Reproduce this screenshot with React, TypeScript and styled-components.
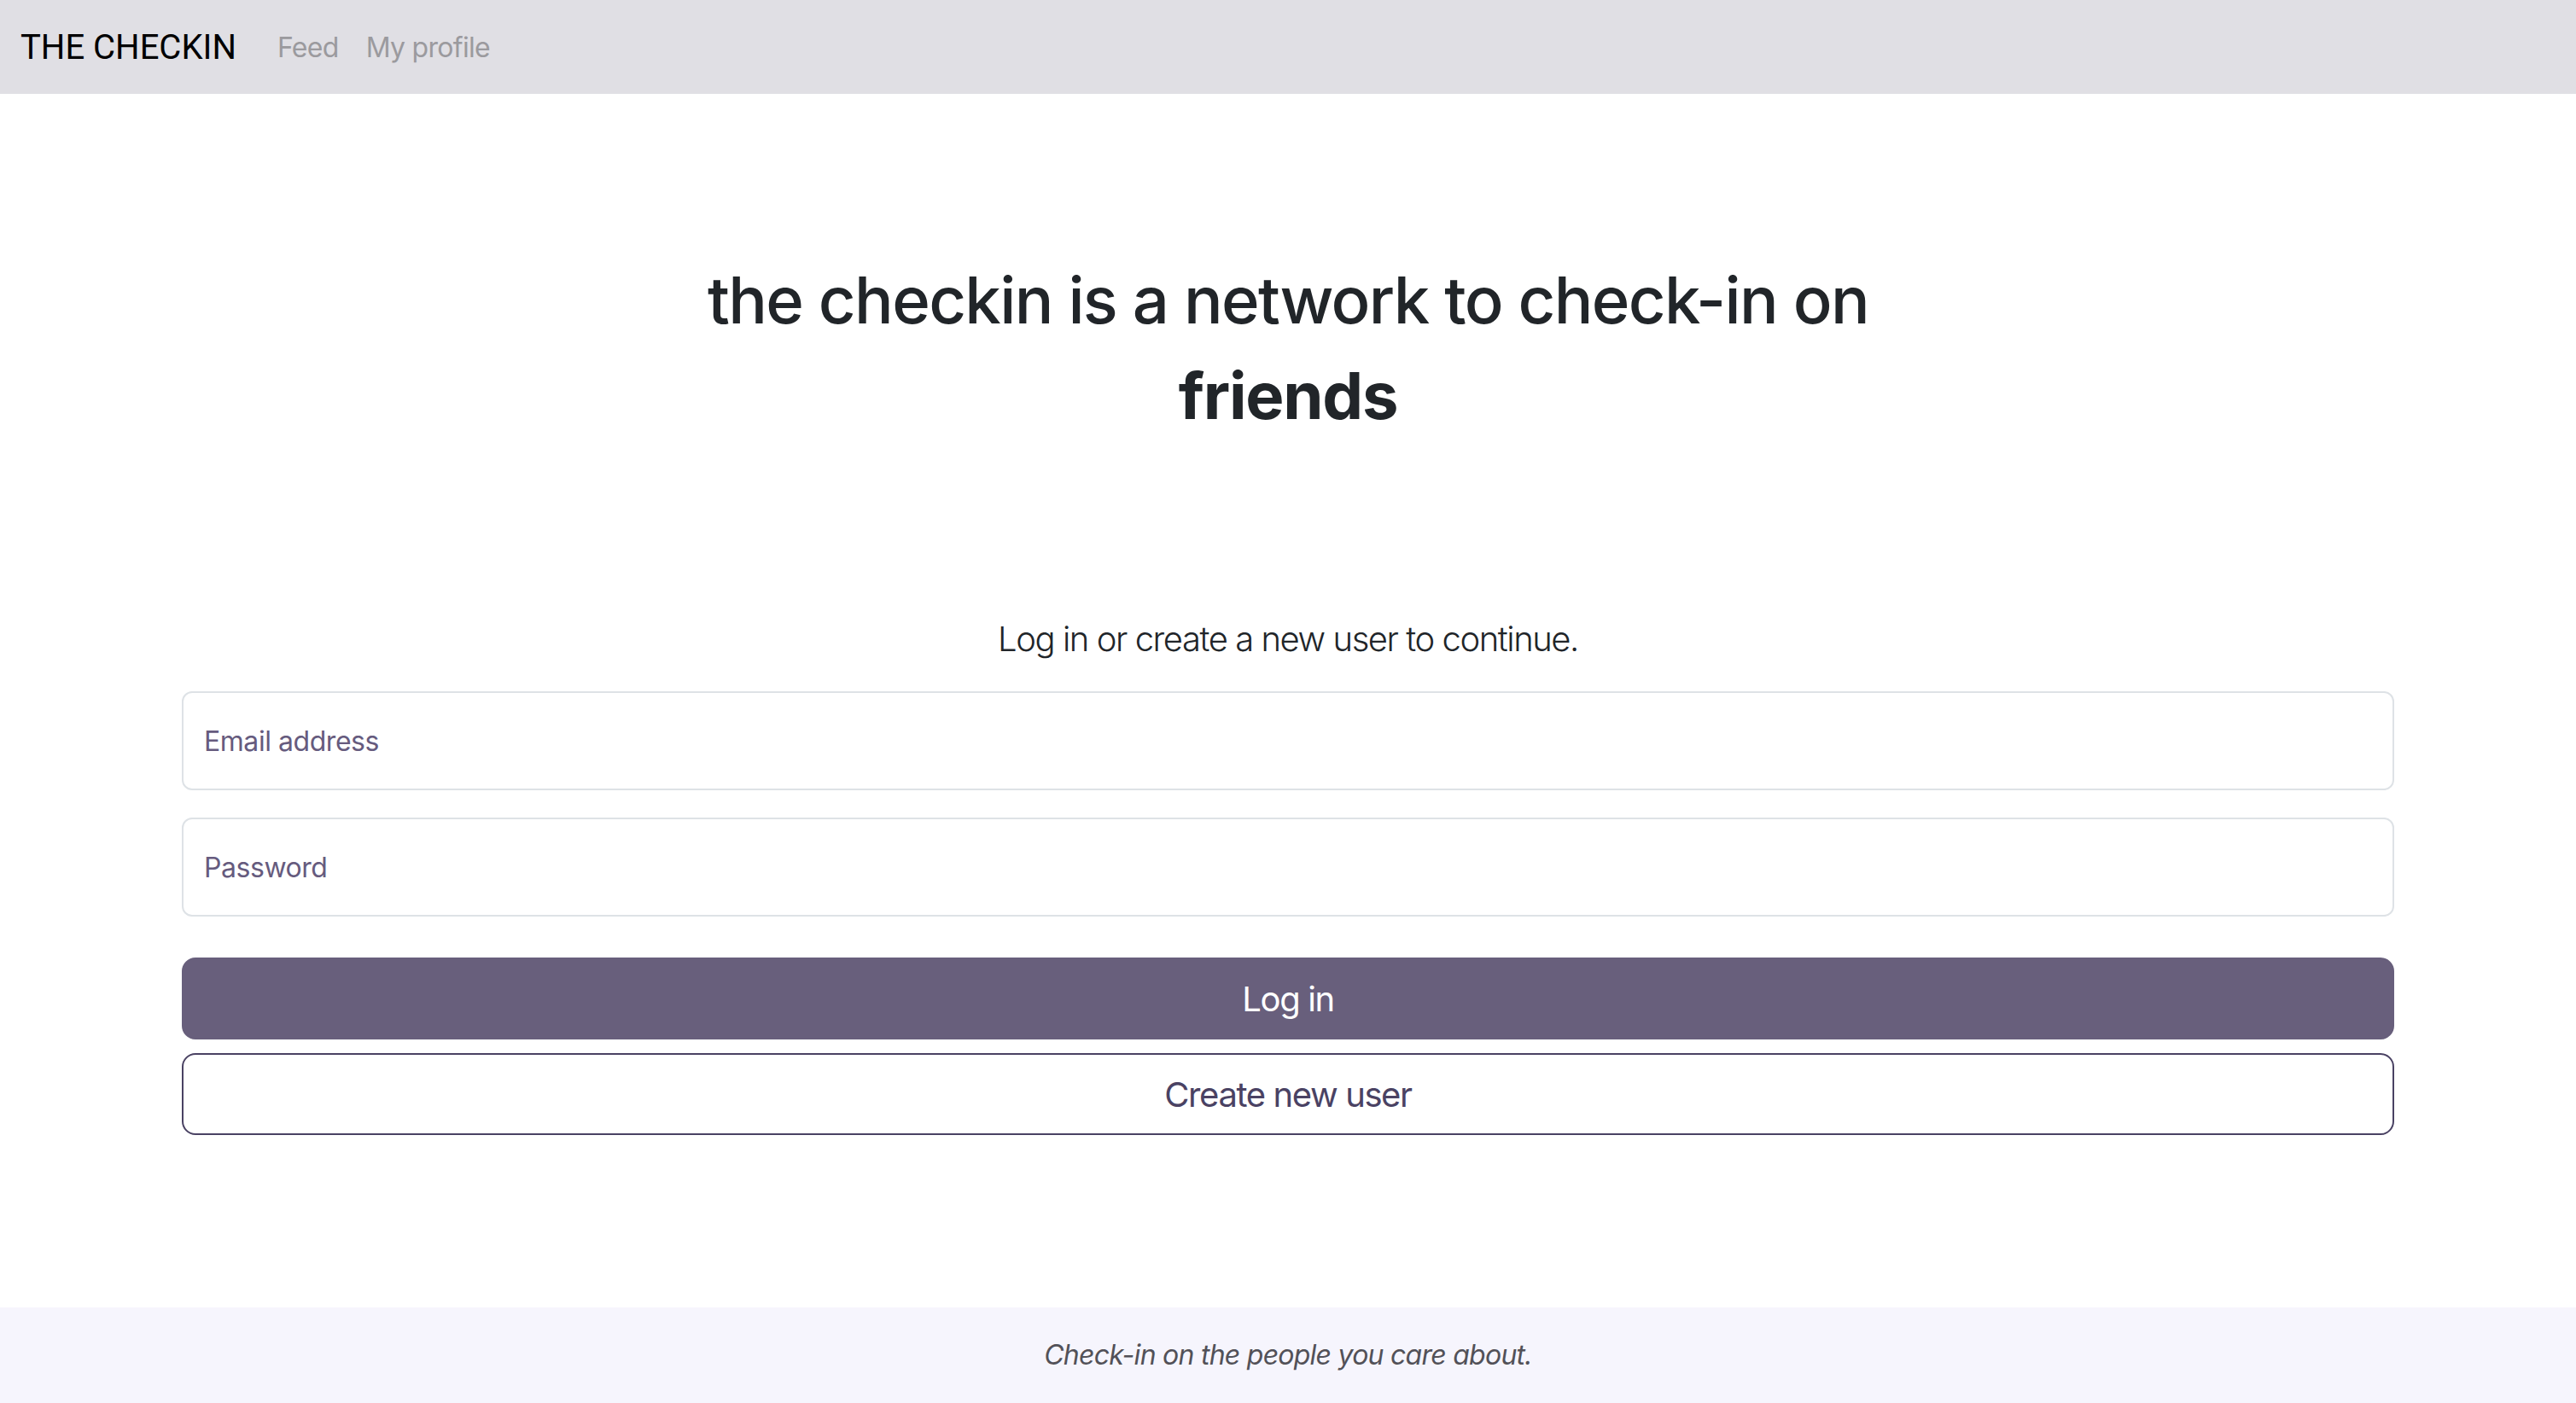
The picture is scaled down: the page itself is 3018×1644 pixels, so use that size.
import React from "react";
import styled, { createGlobalStyle } from "styled-components";

const GlobalStyle = createGlobalStyle`
  *, *::before, *::after { box-sizing: border-box; }
  html, body { margin: 0; padding: 0; }
  body {
    font-family: Inter, "Noto Sans", "Liberation Sans", sans-serif;
    color: #212529;
    background: #ffffff;
  }
`;

const Page = styled.div`
  display: flex;
  flex-direction: column;
  min-height: 100vh;
`;

const Navbar = styled.nav`
  display: flex;
  align-items: center;
  height: 110px;
  padding: 0 24px;
  background: #e0dfe4;
`;

const Brand = styled.a`
  font-family: Roboto, "Liberation Sans", sans-serif;
  font-size: 40px;
  color: #000000;
  text-decoration: none;
  margin-right: 32px;
`;

const NavList = styled.div`
  display: flex;
  align-items: center;
`;

const NavLink = styled.a`
  font-size: 32px;
  letter-spacing: -0.7px;
  color: #9b9a9e;
  text-decoration: none;
  padding: 0 16px;
`;

const Main = styled.main`
  flex: 1;
  width: 2592px;
  margin: 0 auto;
  display: flex;
  flex-direction: column;
`;

const Hero = styled.h1`
  margin: 185px auto 200px;
  max-width: 1500px;
  text-align: center;
  font-size: 76px;
  font-weight: 500;
  line-height: 112px;
  letter-spacing: -1.65px;
  color: #212529;
`;

const Strong = styled.strong`
  font-weight: 700;
  letter-spacing: -1.3px;
`;

const Lead = styled.p`
  margin: 0 0 31px;
  text-align: center;
  font-size: 40px;
  font-weight: 300;
  line-height: 60px;
  letter-spacing: -1.45px;
`;

const Form = styled.form`
  display: flex;
  flex-direction: column;
`;

const Field = styled.div`
  position: relative;
  margin-bottom: 32px;
`;

const Input = styled.input`
  display: block;
  width: 100%;
  height: 116px;
  padding: 0 24px;
  border: 2px solid #dee2e6;
  border-radius: 12px;
  font-family: inherit;
  font-size: 32px;
  color: #212529;
  background: #ffffff;
  outline: none;
`;

const FloatLabel = styled.label`
  position: absolute;
  left: 26px;
  top: 0;
  height: 116px;
  display: flex;
  align-items: center;
  font-size: 32px;
  letter-spacing: -0.45px;
  color: #665b7e;
  pointer-events: none;
`;

const Button = styled.button<{ $variant: "solid" | "outline" }>`
  display: block;
  width: 100%;
  height: 96px;
  border-radius: 16px;
  font-family: inherit;
  font-size: 40px;
  font-weight: 400;
  letter-spacing: -1.4px;
  cursor: pointer;
  border: 2px solid ${(p) => (p.$variant === "solid" ? "#685f7c" : "#4a4263")};
  background: ${(p) => (p.$variant === "solid" ? "#685f7c" : "#ffffff")};
  color: ${(p) => (p.$variant === "solid" ? "#ffffff" : "#4a4263")};
  margin-top: 16px;
`;

const Footer = styled.footer`
  background: #f6f5fd;
  padding: 32px 0;
  text-align: center;
`;

const Tagline = styled.p`
  margin: 0;
  font-size: 32px;
  line-height: 48px;
  font-style: italic;
  letter-spacing: -0.75px;
  color: #525158;
`;

export default function App() {
  return (
    <>
      <GlobalStyle />
      <Page>
        <Navbar>
          <Brand href="#">THE CHECKIN</Brand>
          <NavList>
            <NavLink href="#">Feed</NavLink>
            <NavLink href="#">My profile</NavLink>
          </NavList>
        </Navbar>
        <Main>
          <Hero>
            the checkin is a network to check-in on <Strong>friends</Strong>
          </Hero>
          <Lead>Log in or create a new user to continue.</Lead>
          <Form onSubmit={(e) => e.preventDefault()}>
            <Field>
              <Input id="email" type="email" />
              <FloatLabel htmlFor="email">Email address</FloatLabel>
            </Field>
            <Field>
              <Input id="password" type="password" />
              <FloatLabel htmlFor="password">Password</FloatLabel>
            </Field>
            <Button type="submit" $variant="solid">Log in</Button>
            <Button type="button" $variant="outline">Create new user</Button>
          </Form>
        </Main>
        <Footer>
          <Tagline>Check-in on the people you care about.</Tagline>
        </Footer>
      </Page>
    </>
  );
}
